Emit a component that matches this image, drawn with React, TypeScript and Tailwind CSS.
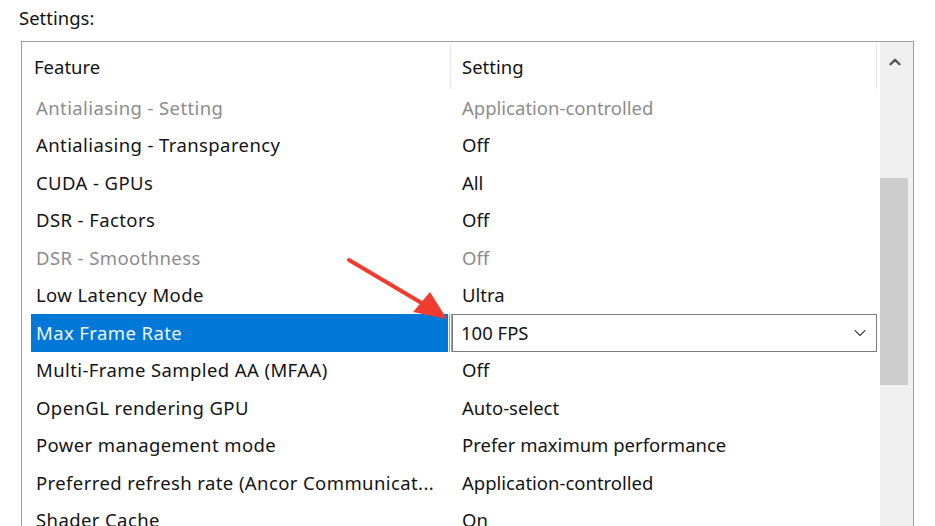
import { ChevronDown, ChevronUp } from "lucide-react";

type Row = {
  feature: string;
  setting: string;
  dim?: boolean;
  selected?: boolean;
};

const rows: Row[] = [
  { feature: "Antialiasing - Setting", setting: "Application-controlled", dim: true },
  { feature: "Antialiasing - Transparency", setting: "Off" },
  { feature: "CUDA - GPUs", setting: "All" },
  { feature: "DSR - Factors", setting: "Off" },
  { feature: "DSR - Smoothness", setting: "Off", dim: true },
  { feature: "Low Latency Mode", setting: "Ultra" },
  { feature: "Max Frame Rate", setting: "100 FPS", selected: true },
  { feature: "Multi-Frame Sampled AA (MFAA)", setting: "Off" },
  { feature: "OpenGL rendering GPU", setting: "Auto-select" },
  { feature: "Power management mode", setting: "Prefer maximum performance" },
  { feature: "Preferred refresh rate (Ancor Communicat...", setting: "Application-controlled" },
  { feature: "Shader Cache", setting: "On" },
];

function SettingRow({ r }: { r: Row }) {
  if (r.selected) {
    return (
      <div className="flex h-[37.5px] items-stretch">
        <div className="ml-[9px] flex w-[417px] items-center bg-[#0078d7] pl-[5px] tracking-[0.4px] text-[#eef5fc]">
          {r.feature}
        </div>
        <div className="ml-[1px] w-[1px] bg-[#a0a0a0]" />
        <div className="ml-[1px] w-[1px] bg-[#a0a0a0]" />
        <div className="flex w-[425px] items-center justify-between border border-[#7a7a7a] pl-[8px] pr-[6px]">
          <span>{r.setting}</span>
          <ChevronDown size={20} strokeWidth={1.3} className="text-[#444]" />
        </div>
      </div>
    );
  }
  return (
    <div className={`flex h-[37.5px] items-center ${r.dim ? "text-[#8c8c8c]" : "text-[#141414]"}`}>
      <div className="w-[430px] whitespace-nowrap pl-[14px] tracking-[0.4px]">{r.feature}</div>
      <div className="whitespace-nowrap pl-[10px]">{r.setting}</div>
    </div>
  );
}

export default function App() {
  return (
    <div
      className="relative h-[526px] w-[935px] overflow-hidden bg-white text-[18.5px] leading-none text-[#141414]"
      style={{ fontFamily: '"Noto Sans", "Open Sans", sans-serif' }}
    >
      <div className="h-[41px] pl-[19px] pt-[9px]">Settings:</div>

      <div className="ml-[21px] flex h-[500px] w-[893px] border border-[#a0a0a0]">
        <div className="w-[858px] overflow-hidden">
          <div className="flex h-[47px] items-center pt-[4px]">
            <div className="flex h-full w-[429px] items-center border-r border-[#e5e5e5] pl-[12px]">
              Feature
            </div>
            <div className="flex h-full w-[426px] items-center border-r border-[#e5e5e5] pl-[11px]">
              Setting
            </div>
          </div>
          {rows.map((r) => (
            <SettingRow key={r.feature} r={r} />
          ))}
        </div>

        <div className="flex w-[33px] flex-col bg-[#f0f0f0]">
          <div className="flex h-[38px] w-[29px] items-center justify-center pt-[2px]">
            <ChevronUp size={18} strokeWidth={3.2} className="text-[#555]" />
          </div>
          <div className="h-[98px]" />
          <div className="h-[207px] w-[28px] bg-[#cdcdcd]" />
        </div>
      </div>

      <svg className="absolute left-0 top-0" width="935" height="526" viewBox="0 0 935 526">
        <line x1="349" y1="260" x2="425" y2="305" stroke="#f23b2f" strokeWidth="4" strokeLinecap="round" />
        <polygon points="447,319 413,312 430,292" fill="#f23b2f" />
      </svg>
    </div>
  );
}
